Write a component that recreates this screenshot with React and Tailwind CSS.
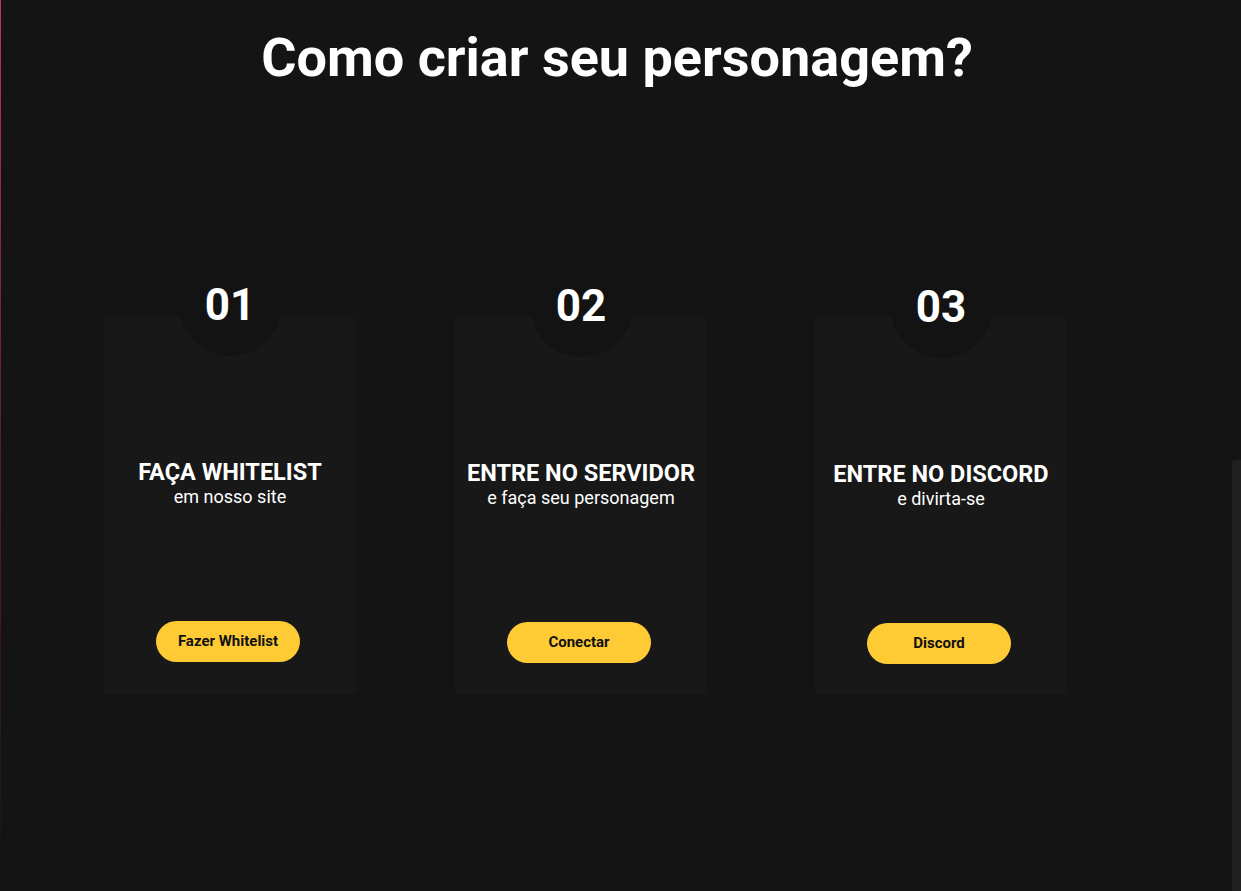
import React from 'react';

const steps = [
  { num: '01', title: 'FAÇA WHITELIST', sub: 'em nosso site', cta: 'Fazer Whitelist', offset: 'ml-[104px]', lift: '-mt-[64px]', gap: 'mt-[103px]', bottom: 'mb-[32px]' },
  { num: '02', title: 'ENTRE NO SERVIDOR', sub: 'e faça seu personagem', cta: 'Conectar', offset: 'ml-[99px]', lift: '-mt-[63px]', gap: 'mt-[103px]', bottom: 'mb-[31px]' },
  { num: '03', title: 'ENTRE NO DISCORD', sub: 'e divirta-se', cta: 'Discord', offset: 'ml-[108px]', lift: '-mt-[62px]', gap: 'mt-[103px]', bottom: 'mb-[30px]' },
];

const StepCard = ({ step }) => (
  <div className={`${step.offset} w-[252px] h-[377px] bg-[#181818] rounded-[3px] flex flex-col items-center`}>
    {/* número sobreposto ao topo do card */}
    <div className={`${step.lift} w-[103px] h-[103px] rounded-full bg-[#131313] flex items-center justify-center`}>
      <span className="text-[44px] font-bold text-white leading-none">{step.num}</span>
    </div>
    <div className={`${step.gap} flex flex-col items-center text-center`}>
      <h3 className="text-[23.5px] font-bold text-white leading-[26px]">{step.title}</h3>
      <p className="mt-[1px] text-[18px] text-white leading-[21px]">{step.sub}</p>
    </div>
    <button className={`mt-auto ${step.bottom} mr-[4px] w-[144px] h-[41px] rounded-full bg-[#fecb35] text-[#111] text-[15px] font-bold`}>
      {step.cta}
    </button>
  </div>
);

export default function App() {
  return (
    <div className="relative h-[891px] w-full overflow-hidden bg-[#141414] font-['Roboto',sans-serif]">
      <div className="absolute left-0 top-0 h-full w-px bg-gradient-to-b from-[#c8325a] via-[#5a1e2e] to-transparent" />
      <h1 className="pt-[26px] pr-[7px] text-center text-[54px] font-bold text-white leading-[64px]">
        Como criar seu personagem?
      </h1>
      <div className="mt-[227px] flex items-start">
        {steps.map((s) => (
          <StepCard key={s.num} step={s} />
        ))}
      </div>
      {/* card cortado na borda direita */}
      <div className="absolute left-[1232px] top-[460px] h-[500px] w-[252px] rounded-[4px] bg-[#202020]" />
    </div>
  );
}
